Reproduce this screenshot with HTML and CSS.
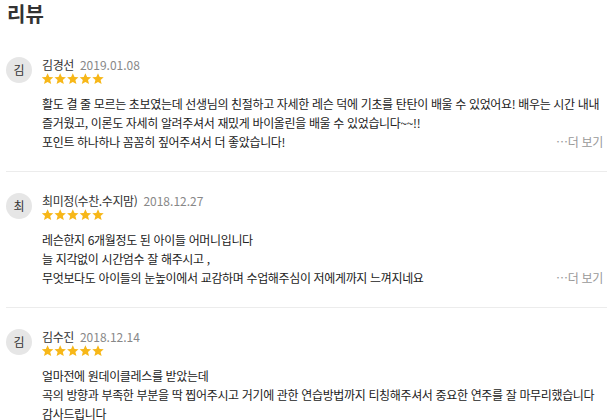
FILE: index.html
```html
<!DOCTYPE html>
<html lang="ko">
<head>
<meta charset="utf-8">
<link rel="stylesheet" href="styles.css">
</head>
<body>
<h2 class="title">리뷰</h2>
<ul class="reviews">
  <li class="review">
    <div class="avatar">김</div>
    <div class="content">
      <div class="meta"><span class="name">김경선</span><span class="date">2019.01.08</span></div>
      <svg class="stars" width="64" height="12" viewBox="0 0 64 12"><g fill="#f7b718"><polygon points="5.6,0.3 7.3,4 11.3,4.3 8.2,7 9.2,11 5.6,8.9 2,11 3,7 -0.1,4.3 3.9,4"/><polygon transform="translate(12.6 0)" points="5.6,0.3 7.3,4 11.3,4.3 8.2,7 9.2,11 5.6,8.9 2,11 3,7 -0.1,4.3 3.9,4"/><polygon transform="translate(25.2 0)" points="5.6,0.3 7.3,4 11.3,4.3 8.2,7 9.2,11 5.6,8.9 2,11 3,7 -0.1,4.3 3.9,4"/><polygon transform="translate(37.8 0)" points="5.6,0.3 7.3,4 11.3,4.3 8.2,7 9.2,11 5.6,8.9 2,11 3,7 -0.1,4.3 3.9,4"/><polygon transform="translate(50.4 0)" points="5.6,0.3 7.3,4 11.3,4.3 8.2,7 9.2,11 5.6,8.9 2,11 3,7 -0.1,4.3 3.9,4"/></g></svg>
      <div class="body">
        <p class="text">활도 결 줄 모르는 초보였는데 선생님의 친절하고 자세한 레슨 덕에 기초를 탄탄이 배울 수 있었어요! 배우는 시간 내내<br>즐거웠고, 이론도 자세히 알려주셔서 재밌게 바이올린을 배울 수 있었습니다~~!!<br>포인트 하나하나 꼼꼼히 짚어주셔서 더 좋았습니다!</p>
        <span class="more">…더 보기</span>
      </div>
    </div>
  </li>
  <li class="review">
    <div class="avatar">최</div>
    <div class="content">
      <div class="meta"><span class="name">최미정(수찬.수지맘)</span><span class="date">2018.12.27</span></div>
      <svg class="stars" width="64" height="12" viewBox="0 0 64 12"><g fill="#f7b718"><polygon points="5.6,0.3 7.3,4 11.3,4.3 8.2,7 9.2,11 5.6,8.9 2,11 3,7 -0.1,4.3 3.9,4"/><polygon transform="translate(12.6 0)" points="5.6,0.3 7.3,4 11.3,4.3 8.2,7 9.2,11 5.6,8.9 2,11 3,7 -0.1,4.3 3.9,4"/><polygon transform="translate(25.2 0)" points="5.6,0.3 7.3,4 11.3,4.3 8.2,7 9.2,11 5.6,8.9 2,11 3,7 -0.1,4.3 3.9,4"/><polygon transform="translate(37.8 0)" points="5.6,0.3 7.3,4 11.3,4.3 8.2,7 9.2,11 5.6,8.9 2,11 3,7 -0.1,4.3 3.9,4"/><polygon transform="translate(50.4 0)" points="5.6,0.3 7.3,4 11.3,4.3 8.2,7 9.2,11 5.6,8.9 2,11 3,7 -0.1,4.3 3.9,4"/></g></svg>
      <div class="body">
        <p class="text">레슨한지 6개월정도 된 아이들 어머니입니다<br>늘 지각없이 시간엄수 잘 해주시고 ,<br>무엇보다도 아이들의 눈높이에서 교감하며 수업해주심이 저에게까지 느껴지네요</p>
        <span class="more">…더 보기</span>
      </div>
    </div>
  </li>
  <li class="review">
    <div class="avatar">김</div>
    <div class="content">
      <div class="meta"><span class="name">김수진</span><span class="date">2018.12.14</span></div>
      <svg class="stars" width="64" height="12" viewBox="0 0 64 12"><g fill="#f7b718"><polygon points="5.6,0.3 7.3,4 11.3,4.3 8.2,7 9.2,11 5.6,8.9 2,11 3,7 -0.1,4.3 3.9,4"/><polygon transform="translate(12.6 0)" points="5.6,0.3 7.3,4 11.3,4.3 8.2,7 9.2,11 5.6,8.9 2,11 3,7 -0.1,4.3 3.9,4"/><polygon transform="translate(25.2 0)" points="5.6,0.3 7.3,4 11.3,4.3 8.2,7 9.2,11 5.6,8.9 2,11 3,7 -0.1,4.3 3.9,4"/><polygon transform="translate(37.8 0)" points="5.6,0.3 7.3,4 11.3,4.3 8.2,7 9.2,11 5.6,8.9 2,11 3,7 -0.1,4.3 3.9,4"/><polygon transform="translate(50.4 0)" points="5.6,0.3 7.3,4 11.3,4.3 8.2,7 9.2,11 5.6,8.9 2,11 3,7 -0.1,4.3 3.9,4"/></g></svg>
      <div class="body">
        <p class="text">얼마전에 원데이클레스를 받았는데<br>곡의 방향과 부족한 부분을 딱 찝어주시고 거기에 관한 연습방법까지 티칭해주셔서 중요한 연주를 잘 마무리했습니다<br>감사드립니다</p>
      </div>
    </div>
  </li>
</ul>
</body>
</html>
```

FILE: styles.css
```css
html, body {
  margin: 0;
  padding: 0;
  background: #fff;
}
body {
  font-family: "Noto Sans CJK KR", "Noto Sans", sans-serif;
  color: #333;
  padding-left: 6px;
  overflow: hidden;
}
.title {
  margin: 0;
  padding-left: 1px;
  font-size: 20px;
  line-height: 28px;
  font-weight: 700;
  color: #333;
}
.reviews {
  list-style: none;
  margin: 8px 0 0;
  padding: 0;
}
.review {
  display: flex;
  gap: 10px;
  padding: 21px 0 20px;
  border-bottom: 1px solid #ececec;
}
.review:last-child {
  border-bottom: none;
}
.avatar {
  flex: none;
  width: 26px;
  height: 26px;
  border-radius: 50%;
  background: #e6e6e6;
  font-size: 12px;
  line-height: 26px;
  text-align: center;
  color: #333;
}
.content {
  flex: 1;
  min-width: 0;
  padding-right: 4px;
}
.meta {
  display: flex;
  align-items: baseline;
  gap: 6px;
  font-size: 12px;
  line-height: 16px;
  letter-spacing: -0.4px;
}
.name { color: #333; }
.date { color: #888; letter-spacing: 0; }
.stars {
  display: block;
  margin-top: 0;
}
.body {
  display: grid;
  margin-top: 9px;
}
.text {
  grid-area: 1 / 1;
  margin: 0;
  font-size: 12px;
  line-height: 19px;
  letter-spacing: -0.35px;
  white-space: nowrap;
  color: #222;
}
.more {
  grid-area: 1 / 1;
  justify-self: end;
  align-self: end;
  font-size: 12px;
  line-height: 19px;
  color: #999;
  letter-spacing: -0.3px;
}
```
